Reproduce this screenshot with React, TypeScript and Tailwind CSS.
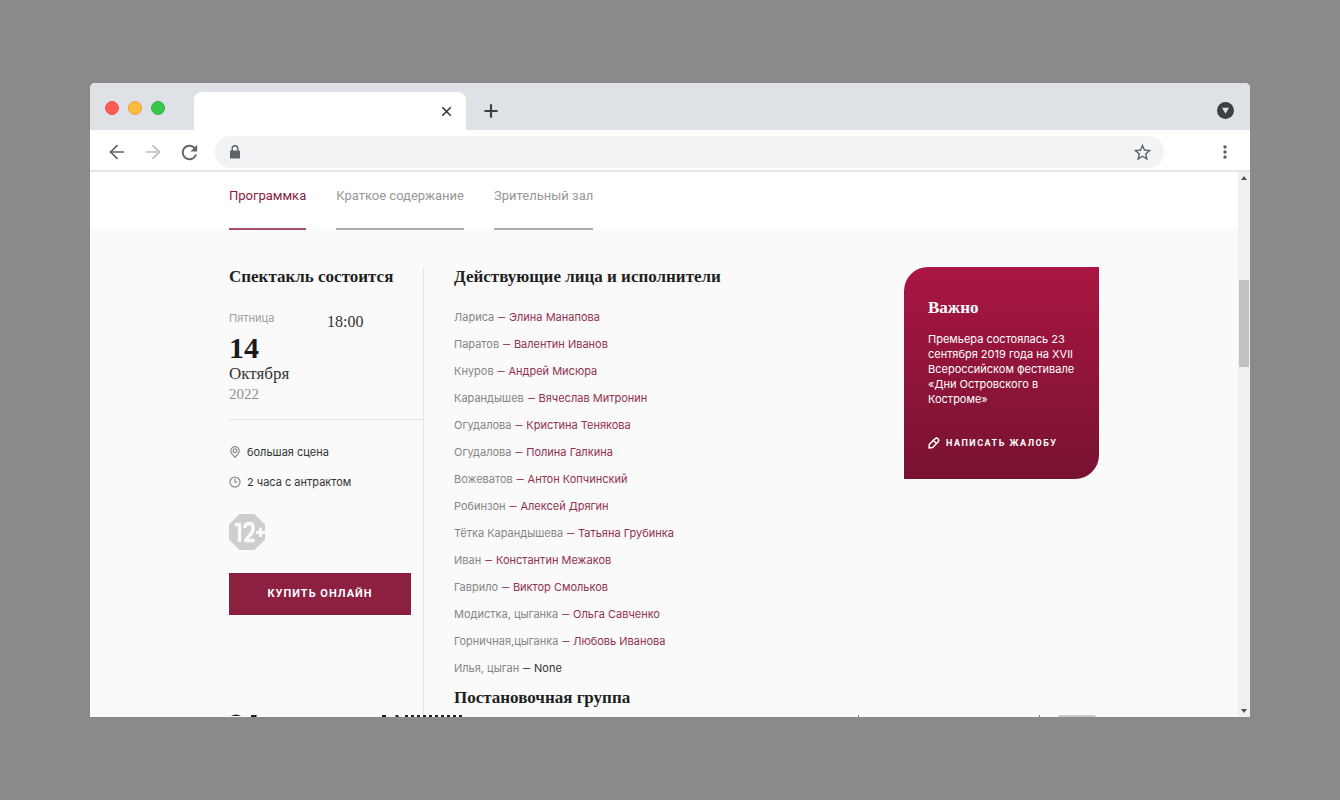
import React from "react";
import { ArrowLeft, ArrowRight, Clock3, Plus, X } from "lucide-react";
import { MdMoreVert, MdRefresh, MdStarBorder } from "react-icons/md";

const tabs = [
  { title: "Программка", active: true },
  { title: "Краткое содержание", active: false },
  { title: "Зрительный зал", active: false },
];

const cast = [
  { role: "Лариса", actor: "Элина Манапова" },
  { role: "Паратов", actor: "Валентин Иванов" },
  { role: "Кнуров", actor: "Андрей Мисюра" },
  { role: "Карандышев", actor: "Вячеслав Митронин" },
  { role: "Огудалова", actor: "Кристина Тенякова" },
  { role: "Огудалова", actor: "Полина Галкина" },
  { role: "Вожеватов", actor: "Антон Копчинский" },
  { role: "Робинзон", actor: "Алексей Дрягин" },
  { role: "Тётка Карандышева", actor: "Татьяна Грубинка" },
  { role: "Иван", actor: "Константин Межаков" },
  { role: "Гаврило", actor: "Виктор Смольков" },
  { role: "Модистка, цыганка", actor: "Ольга Савченко" },
  { role: "Горничная,цыганка", actor: "Любовь Иванова" },
  { role: "Илья, цыган", actor: null },
];

const Chrome = () => (
  <header>
    <div className="flex h-[47px] items-end bg-[#dee1e6] pl-[15px] pr-4">
      <div className="flex gap-[9px] pb-[15px]">
        <span className="size-[14px] rounded-full border border-[#f25450] bg-[#ff5a56]" />
        <span className="size-[14px] rounded-full border border-[#e0a03a] bg-[#ffbb3e]" />
        <span className="size-[14px] rounded-full border border-[#2fb23f] bg-[#34c84a]" />
      </div>
      <div className="ml-[29px] flex h-[38px] w-[272px] items-center justify-end rounded-t-lg bg-white pr-3">
        <button aria-label="Закрыть вкладку" className="text-[#3c4043]">
          <X size={15} strokeWidth={2.8} />
        </button>
      </div>
      <button aria-label="Новая вкладка" className="mb-[9px] ml-[15px] text-[#3c4043]">
        <Plus size={20} strokeWidth={2.6} />
      </button>
      <button aria-label="Поиск вкладок" className="mb-[11px] ml-auto">
        <svg width="17" height="17" viewBox="0 0 16 16">
          <circle cx="8" cy="8" r="8" fill="#3c4043" />
          <path d="M4.700 5.300h6.600L8 11z" fill="#dee1e6" />
        </svg>
      </button>
    </div>
    <div className="flex h-[42px] items-center border-b-2 border-[#e4e5e7] bg-white pl-4 pr-[15px] pt-1 text-[#5f6368]">
      <button aria-label="Назад">
        <ArrowLeft size={22} strokeWidth={1.9} />
      </button>
      <button aria-label="Вперёд" className="ml-[14px] text-[#babcbe]">
        <ArrowRight size={22} strokeWidth={1.9} />
      </button>
      <button aria-label="Обновить" className="ml-[14px]">
        <MdRefresh size={23} />
      </button>
      <div className="ml-[14px] flex h-8 flex-1 items-center rounded-full bg-[#f1f3f4] pl-3 pr-[11px]">
        <svg width="16" height="16" viewBox="0 0 16 16">
          <path d="M5.200 7V4.500a2.800 2.800 0 0 1 5.600 0V7" fill="none" stroke="#5f6368" strokeWidth="1.400" />
          <rect x="3" y="6.500" width="10" height="8" rx="1" fill="#5f6368" />
        </svg>
        <input aria-label="Адрес" className="min-w-0 flex-1 px-2 text-sm outline-none" />
        <button aria-label="В закладки">
          <MdStarBorder size={21} />
        </button>
      </div>
      <button aria-label="Меню" className="ml-[51px]">
        <MdMoreVert size={20} />
      </button>
    </div>
  </header>
);

const Scrollbar = () => (
  <div className="flex w-3 shrink-0 flex-col items-center justify-between bg-[#f0f0f0] py-1">
    <svg width="6" height="4" viewBox="0 0 6 4">
      <path d="M3 0l3 4H0z" fill="#505050" />
    </svg>
    <div className="mb-[242px] h-[87px] w-[10px] bg-[#c1c1c1]" />
    <svg width="6" height="4" viewBox="0 0 6 4">
      <path d="M0 0h6L3 4z" fill="#505050" />
    </svg>
  </div>
);

const AgeBadge = () => (
  <svg width="36" height="36" viewBox="0 0 36 36" className="mt-6" role="img" aria-label="12+">
    <path
      d="M11 1h14l10 10v14L25 35H11L1 25V11z"
      fill="#cecece"
      stroke="#cecece"
      strokeWidth="2"
      strokeLinejoin="round"
    />
    <g fill="none" stroke="#fafafa" strokeWidth="3.4">
      <path d="M6 10.500h4.500V28" />
      <path d="M16 14v-1q0-3.500 4-3.500t4 3.500v2q0 2-1.500 4L17 25.500V26.500h8.500" />
      <path d="M27 18.500h9M31.500 14v9" strokeWidth="3" />
    </g>
  </svg>
);

const Schedule = () => (
  <section className="w-[195px] shrink-0 border-r border-[#e6e6e6]">
    <h2 className="whitespace-nowrap font-['Liberation_Serif'] text-[17px] font-bold leading-5 text-[#1f1f1f]">
      Спектакль состоится
    </h2>
    <div className="mt-[23px] flex border-b border-[#e6e6e6] pb-[15px] font-['Liberation_Serif']">
      <div className="w-[98px]">
        <p className="font-['Inter'] text-[11px] leading-4 text-[#a0a0a0]">Пятница</p>
        <p className="mt-[6px] text-[30px] font-bold leading-8 text-[#1a1a1a]">14</p>
        <p className="text-[17px] leading-5 text-[#333]">Октября</p>
        <p className="text-[15px] leading-5 text-[#8f8f8f]">2022</p>
      </div>
      <p className="pt-[2px] text-base leading-5 text-[#333]">18:00</p>
    </div>
    <ul className="mt-6 text-[11px] leading-4 text-[#333]">
      <li className="flex items-center gap-[6px]">
        <svg width="12" height="12" viewBox="0 0 12 12" fill="none" stroke="#8f8f8f" strokeWidth="1.200">
          <path d="M6 11.300Q1.800 7.500 1.800 4.800a4.200 4.200 0 0 1 8.400 0Q10.200 7.500 6 11.300z" />
          <circle cx="6" cy="4.800" r="1.900" />
        </svg>
        большая сцена
      </li>
      <li className="mt-[14px] flex items-center gap-[6px]">
        <Clock3 size={12} color="#8f8f8f" strokeWidth={2.5} />2 часа с антрактом
      </li>
    </ul>
    <AgeBadge />
    <button className="mt-[23px] h-[42px] w-[182px] bg-[#8c2041] font-['Roboto'] text-[11px] font-bold tracking-[1px] text-white">
      КУПИТЬ ОНЛАЙН
    </button>
  </section>
);

const Notice = () => (
  <aside className="w-[195px] shrink-0 self-start rounded-br-3xl rounded-tl-3xl bg-gradient-to-b from-[#aa1644] to-[#771230] pb-7 pl-6 pr-5 pt-[31px] text-white">
    <h2 className="font-['Liberation_Serif'] text-[17px] font-bold leading-5">Важно</h2>
    <p className="mt-[14px] text-[11px] leading-[15px]">
      Премьера состоялась 23 сентября 2019 года на XVII Всероссийском фестивале «Дни Островского в
      Костроме»
    </p>
    <button className="mt-7 flex items-center gap-[6px] whitespace-nowrap font-['Roboto'] text-[9px] font-bold leading-4 tracking-[1.5px]">
      <svg width="12" height="12" viewBox="0 0 12 12" fill="none" stroke="currentColor" strokeWidth="1.500" strokeLinejoin="round">
        <path d="M1 11l.4-3.600L7 1.800q1.600-1.300 3 0t0 3.200L4.600 10.600zM5.500 3.500l3 3" />
      </svg>
      НАПИСАТЬ ЖАЛОБУ
    </button>
  </aside>
);

// Upper edge of the next section, mostly below the fold
const NextSectionEdge = () => (
  <svg
    width="870"
    height="3"
    viewBox="0 0 870 3"
    className="absolute bottom-0 left-1/2 -translate-x-1/2"
    aria-hidden="true"
  >
    <g fill="#1f1f1f">
      <path d="M2 2q5-3 10 0zM22 1h6l-1 2h-5z" />
      <path d="M153 1h4v2h-4zM166 1h3l1 2h-3z" />
    </g>
    <path d="M176 2h60" stroke="#1f1f1f" strokeWidth="2" strokeDasharray="3 3" />
    <path d="M629.500 1v2M810.500 1v2" stroke="#c4566f" />
    <path d="M829 3q0-2 2-2h34q2 0 2 2z" fill="#c8c8c8" />
  </svg>
);

export default function App() {
  return (
    <div className="flex min-h-screen items-center bg-[#8a8a8a] px-[90px] font-['Inter',sans-serif]">
      <div className="w-full overflow-hidden rounded-t-[5px] bg-[#fafafa]">
        <Chrome />
        <div className="flex">
          <main className="relative min-w-0 flex-1">
            <nav className="h-[57px] bg-white">
              <div className="mx-auto flex max-w-[870px] gap-[30px] font-['Roboto'] text-[13px]">
                {tabs.map((tab) => (
                  <a
                    key={tab.title}
                    href="#"
                    className={
                      tab.active
                        ? "h-[58px] border-b-2 border-[#a84e6c] pt-[14px] leading-5 text-[#8c2041]"
                        : "h-[58px] border-b-2 border-[#acacac] pt-[14px] leading-5 text-[#979797]"
                    }
                  >
                    {tab.title}
                  </a>
                ))}
              </div>
            </nav>
            <div className="mx-auto flex max-w-[870px] pt-[38px]">
              <Schedule />
              <section className="flex-1 pb-[9px] pl-[30px]">
                <h2 className="font-['Liberation_Serif'] text-[17px] font-bold leading-5 text-[#1f1f1f]">
                  Действующие лица и исполнители
                </h2>
                <ul className="mt-[17px] text-[11px] leading-[27px] text-[#333]">
                  {cast.map(({ role, actor }, i) => (
                    <li key={i}>
                      <span className="text-[#858585]">{role}</span>{" "}
                      {actor ? (
                        <a href="#" className="text-[#93304f]">
                          <span className="font-['Roboto']">—</span> {actor}
                        </a>
                      ) : (
                        <>
                          <span className="font-['Roboto']">—</span> None
                        </>
                      )}
                    </li>
                  ))}
                </ul>
                <h2 className="mt-[6px] font-['Liberation_Serif'] text-[17px] font-bold leading-5 text-[#1f1f1f]">
                  Постановочная группа
                </h2>
              </section>
              <Notice />
            </div>
            <NextSectionEdge />
          </main>
          <Scrollbar />
        </div>
      </div>
    </div>
  );
}
